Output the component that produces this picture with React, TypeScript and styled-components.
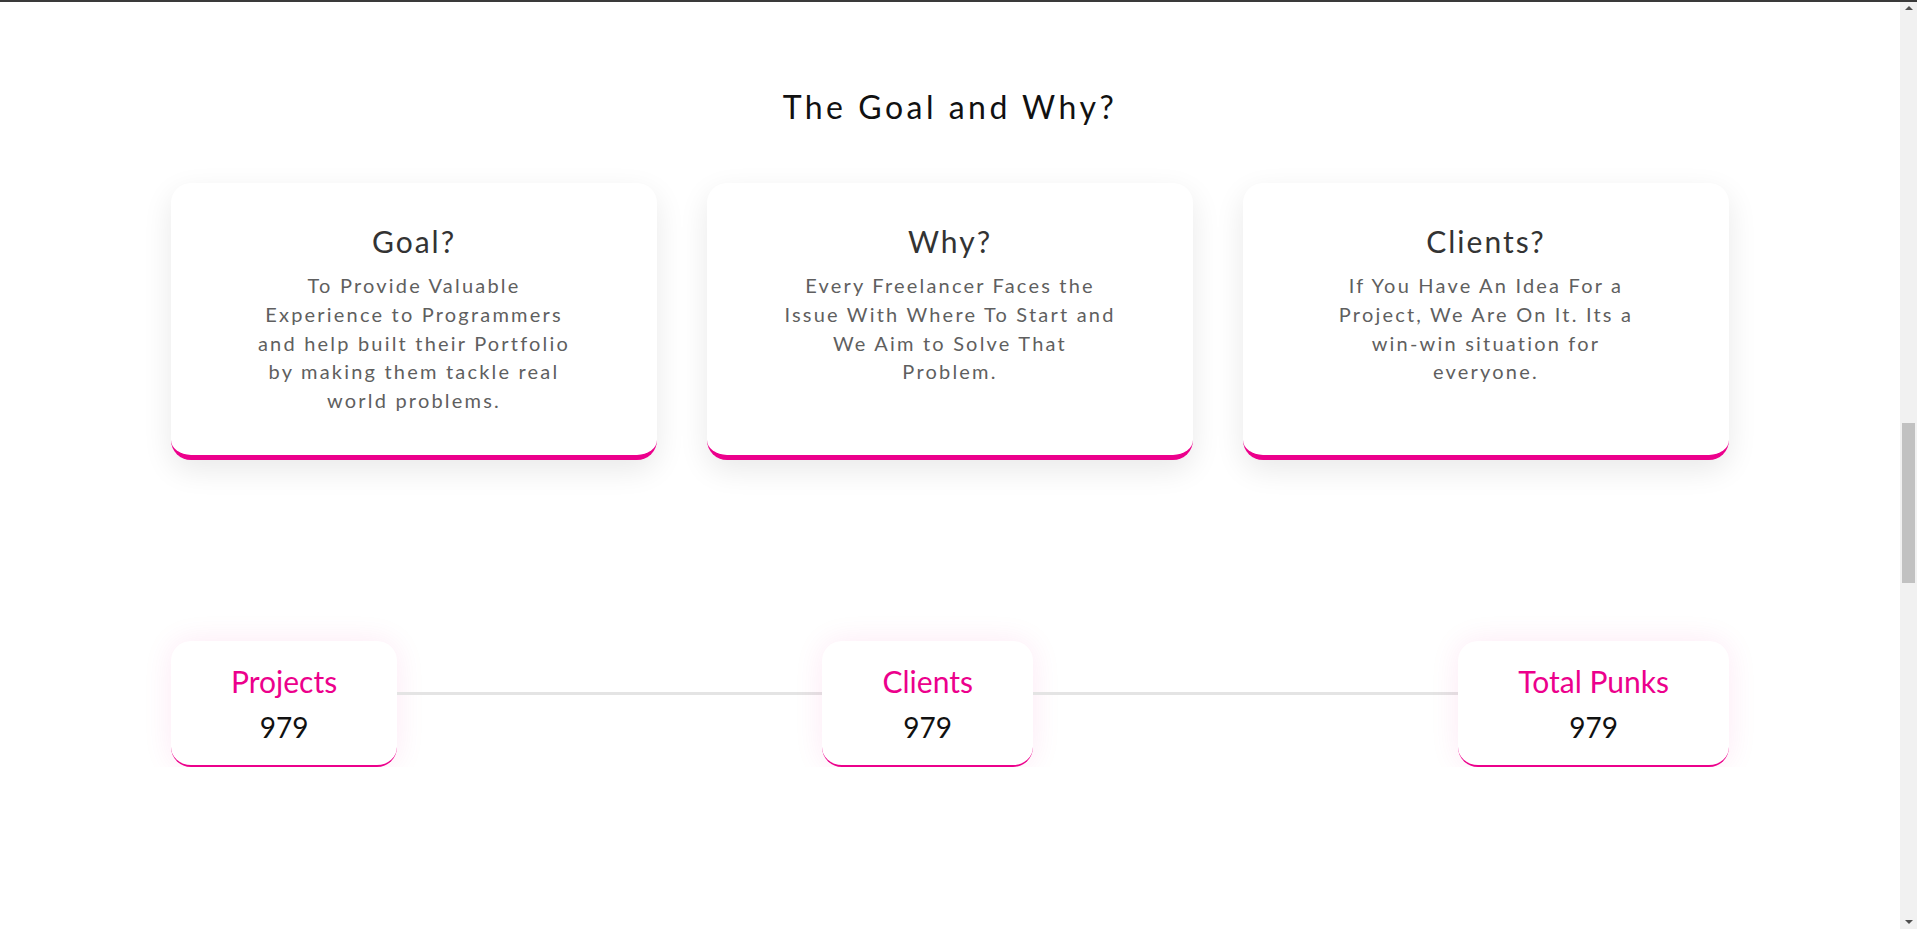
import { createGlobalStyle } from 'styled-components';
import styled from 'styled-components';

const GlobalStyle = createGlobalStyle`
  body {
    margin: 0;
    background: #fff;
    font-family: 'Lato', 'Noto Sans', sans-serif;
  }
`

const pink = '#ec008c';

const TopEdge = styled.div`
  height: 2px;
  background: #3a3a3a;
`

// the page is shown scrolled, so the window's scrollbar is part of the picture
const ScrollTrack = styled.div`
  position: fixed;
  top: 2px;
  right: 0;
  bottom: 0;
  width: 17px;
  background: #f1f1f1;
  display: flex;
  flex-direction: column;
  align-items: center;
  padding: 4px 0 5px 0;
  box-sizing: border-box;
`

const ScrollThumb = styled.div`
  width: 13px;
  height: 160px;
  margin-top: 413px;
  background: #c1c1c1;
`

const ScrollSpace = styled.div`
  flex: 1;
`

const ScrollArrow = styled.div<{ $down?: boolean }>`
  width: 0;
  height: 0;
  border-left: 4.5px solid transparent;
  border-right: 4.5px solid transparent;
  ${(p) => (p.$down ? 'border-top: 4px solid #505050;' : 'border-bottom: 4px solid #505050;')}
`

const Page = styled.div`
  padding-right: 17px;
`

const Section = styled.section`
  width: 82%;
  margin: 0 auto;
  padding: 86px 0 0 0;
`

const Title = styled.h1`
  margin: 0;
  text-align: center;
  font-size: 32px;
  line-height: 38px;
  font-weight: 400;
  letter-spacing: 3.5px;
  color: #111;
`

const CardGrid = styled.div`
  display: grid;
  grid-template-columns: repeat(3, 1fr);
  gap: 50px;
  margin-top: 57px;
`

const Card = styled.div`
  background: #fff;
  border-radius: 20px;
  border-bottom: 5px solid ${pink};
  box-shadow: 0 10px 30px rgba(0, 0, 0, 0.09);
  padding: 40px 0 40px 0;
  text-align: center;
`

const CardTitle = styled.h2`
  margin: 0;
  font-size: 30px;
  line-height: 36px;
  font-weight: 400;
  letter-spacing: 2px;
  color: #333;
`

const CardText = styled.p`
  margin: 12px auto 0 auto;
  max-width: 333px;
  font-size: 20px;
  line-height: 28.75px;
  letter-spacing: 2.2px;
  color: #5f5f5f;
`

const StatRow = styled.div`
  display: flex;
  align-items: flex-start;
  margin-top: 181px;
`

const StatCard = styled.div`
  background: #fff;
  border-radius: 20px;
  border-bottom: 2px solid ${pink};
  box-shadow: 0 0 30px rgba(236, 0, 140, 0.09);
  padding: 22px 60px 21px 60px;
  text-align: center;
`

const StatLabel = styled.div`
  font-size: 30px;
  line-height: 36px;
  color: ${pink};
`

const StatValue = styled.div`
  margin-top: 11px;
  font-size: 28px;
  line-height: 34px;
  color: #111;
`

const Connector = styled.div`
  flex: 1;
  height: 3px;
  margin-top: 51px;
  background: #e4e4e4;
`

const goals = [
  {
    title: 'Goal?',
    text: 'To Provide Valuable Experience to Programmers and help built their Portfolio by making them tackle real world problems.',
  },
  {
    title: 'Why?',
    text: 'Every Freelancer Faces the Issue With Where To Start and We Aim to Solve That Problem.',
  },
  {
    title: 'Clients?',
    text: 'If You Have An Idea For a Project, We Are On It. Its a win-win situation for everyone.',
  },
];

const stats = [
  { label: 'Projects', value: 979 },
  { label: 'Clients', value: 979 },
  { label: 'Total Punks', value: 979 },
];

function App() {
  return (
    <>
      <GlobalStyle />
      <TopEdge />
      <Page>
        <Section>
          <Title>The Goal and Why?</Title>
          <CardGrid>
            {goals.map((g) => (
              <Card key={g.title}>
                <CardTitle>{g.title}</CardTitle>
                <CardText>{g.text}</CardText>
              </Card>
            ))}
          </CardGrid>
          <StatRow>
            {stats.map((s, i) => [
              i > 0 ? <Connector key={'line' + i} /> : null,
              <StatCard key={s.label}>
                <StatLabel>{s.label}</StatLabel>
                <StatValue>{s.value}</StatValue>
              </StatCard>,
            ])}
          </StatRow>
        </Section>
      </Page>
      <ScrollTrack>
        <ScrollArrow />
        <ScrollThumb />
        <ScrollSpace />
        <ScrollArrow $down />
      </ScrollTrack>
    </>
  );
}

export default App;
